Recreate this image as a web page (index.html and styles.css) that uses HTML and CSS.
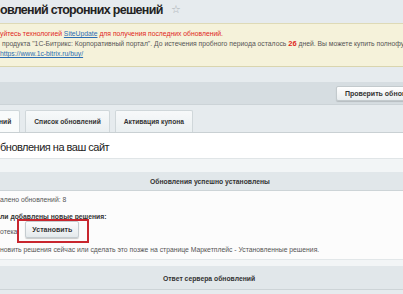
FILE: index.html
```html
<!DOCTYPE html>
<html lang="ru">
<head>
    <meta charset="UTF-8">
    <title>Обновления сторонних решений</title>
    <link rel="stylesheet" href="styles.css">
</head>
<body>
    <div class="page">
        <div class="title">
            <h1>овлений сторонних решений</h1>
            <span class="star">&#9734;</span>
        </div>

        <div class="notice">
            <p class="warn">уйтесь технологией <a href="#">SiteUpdate</a> для получения последних обновлений.</p>
            <p>продукта "1С-Битрикс: Корпоративный портал". До истечения пробного периода осталось <b>26</b> дней. Вы можете купить полнофункциональную версию</p>
            <p><a href="#">https://www.1c-bitrix.ru/buy/</a></p>
        </div>

        <div class="toolbar">
            <button class="tool-button">Проверить обновления</button>
        </div>

        <div class="tabs">
            <div class="tab active">ний</div>
            <div class="tab">Список обновлений</div>
            <div class="tab">Активация купона</div>
        </div>

        <div class="panel">
            <h2 class="panel-title">бновления на ваш сайт</h2>
            <div class="spacer"></div>
            <div class="section-head">Обновления успешно установлены</div>
            <div class="section-body">
                <p>алено обновлений: 8</p>
                <p class="bold">ли добавлены новые решения:</p>
                <div class="install-row">
                    <span>отека</span>
                    <div class="highlight">
                        <button class="install-button">Установить</button>
                    </div>
                </div>
                <p>новить решения сейчас или сделать это позже на странице Маркетплейс - Установленные решения.</p>
            </div>
            <div class="spacer small"></div>
            <div class="section-head second">Ответ сервера обновлений</div>
        </div>
    </div>
</body>
</html>
```

FILE: styles.css
```css
body {
    margin: 0;
    padding: 0;
    background-color: #e6ebee;
    font-family: "Liberation Sans", Arial, sans-serif;
    color: #333;
    overflow: hidden;
}
.page {
    width: 403px;
    height: 294px;
    overflow: hidden;
    white-space: nowrap;
}
.title {
    display: flex;
    align-items: center;
    height: 19px;
    margin-bottom: 4px;
}
.title h1 {
    margin: 0;
    font-size: 12.5px;
    letter-spacing: -0.7px;
    font-weight: bold;
    color: #222;
}
.star {
    margin-left: 8px;
    font-size: 11px;
    color: #a9afb3;
}
.notice {
    height: 44px;
    background-color: #f5f2da;
    border-top: 1px solid #dedab6;
    border-bottom: 1px solid #d9d5ae;
    padding-top: 6px;
    box-sizing: border-box;
    font-size: 6.8px;
}
.notice p {
    margin: 0 0 2px 0;
    line-height: 8px;
    color: #555;
}
.notice p:nth-child(2) {
    padding-left: 2px;
}
.notice .warn {
    color: #e0261a;
}
.notice a {
    color: #2a6db3;
}
.notice b {
    color: #e0261a;
    font-size: 7.5px;
}
.toolbar {
    margin-top: 15px;
    height: 22px;
    background-color: #d6dde1;
    border-bottom: 1px solid #ccd3d7;
    display: flex;
    justify-content: flex-end;
    align-items: center;
}
.tool-button {
    height: 15px;
    padding: 0 8px;
    margin-right: -33px;
    border: 1px solid #c3cacd;
    border-radius: 2px;
    background: linear-gradient(#ffffff, #e9edef);
    font-family: inherit;
    font-size: 7px;
    font-weight: bold;
    color: #333;
    box-shadow: 0 1px 1px rgba(0, 0, 0, 0.15);
}
.tabs {
    display: flex;
    gap: 5px;
    margin-top: 5px;
    height: 22px;
    align-items: flex-end;
}
.tab {
    height: 21px;
    line-height: 22px;
    padding: 0 8px;
    background: linear-gradient(#f7f9fa, #eaeff1);
    border: 1px solid #d0d7da;
    border-bottom: none;
    border-radius: 2px 2px 0 0;
    font-size: 6.7px;
    font-weight: bold;
    color: #333;
}
.tab.active {
    margin-left: -10px;
    background: #f9fbfb;
}
.panel {
    background-color: #fff;
    border-top: 1px solid #c9d0d3;
}
.panel-title {
    margin: 0;
    height: 25px;
    line-height: 28px;
    font-size: 11px;
    letter-spacing: -0.5px;
    font-weight: normal;
    color: #222;
    border-bottom: 1px solid #e0e5e7;
}
.spacer {
    height: 13px;
    background-color: #f2f5f6;
}
.spacer.small {
    height: 6px;
    border-top: 1px solid #e2e7e9;
}
.section-head {
    height: 18px;
    line-height: 19px;
    padding-left: 150px;
    background-color: #e1e7ea;
    border-bottom: 1px solid #cdd4d7;
    font-size: 6.8px;
    font-weight: bold;
    color: #333;
}
.section-head.second {
    height: 23px;
    line-height: 25px;
    padding-left: 163px;
}
.section-body {
    background-color: #fcfcfc;
    padding: 5px 0 5px 0;
    font-size: 6.8px;
    color: #555;
}
.section-body p {
    margin: 0;
    line-height: 8px;
}
.section-body p:first-child {
    margin-bottom: 9px;
}
.section-body .bold {
    font-weight: bold;
    color: #333;
}
.install-row {
    display: flex;
    align-items: center;
    margin: -2px 0 3px 0;
}
.highlight {
    padding: 0 8px 3px 6px;
    border: 2px solid #c8262e;
}
.install-button {
    display: block;
    height: 17px;
    padding: 0 6px;
    border: 1px solid #c5ccd0;
    border-radius: 2px;
    background: linear-gradient(#fdfdfd, #e4e9ec);
    font-family: inherit;
    font-size: 7px;
    font-weight: bold;
    color: #333;
    box-shadow: 0 1px 1px rgba(0, 0, 0, 0.2);
}
```
